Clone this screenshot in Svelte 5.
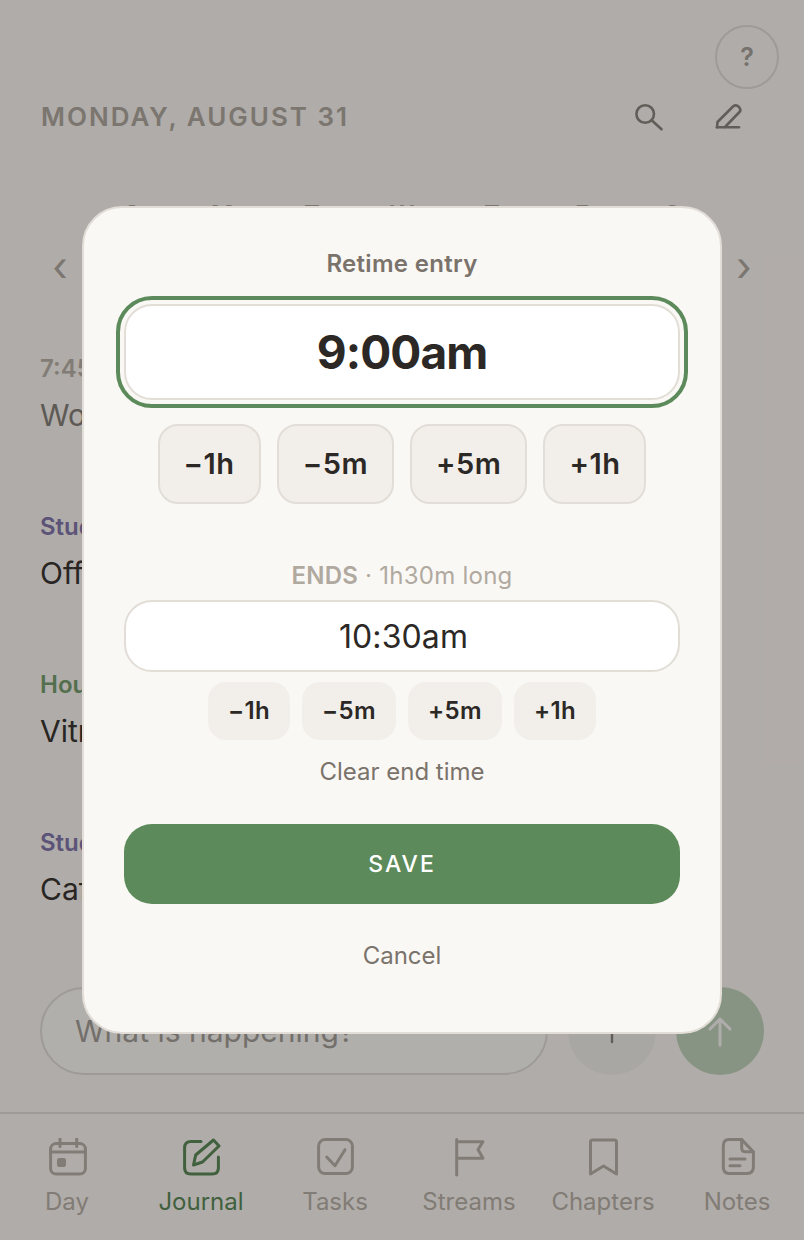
<script lang="ts">
  const days = ['S', 'M', 'T', 'W', 'T', 'F', 'S'];

  const entries = [
    { label: '7:45am', tone: 'stamp', text: 'Woke up early', past: true },
    { label: 'Study', tone: 'study', text: 'Office hours' },
    { label: 'House', tone: 'house', text: 'Vitrine' },
    { label: 'Study', tone: 'study', text: 'Cafe reading' },
  ];

  const tabs = ['Day', 'Journal', 'Tasks', 'Streams', 'Chapters', 'Notes'];
  const stepLabels = ['−1h', '−5m', '+5m', '+1h'];
</script>

<div class="page">
  <div class="help-row"><div class="help">?</div></div>

  <header class="head">
    <h1>MONDAY, AUGUST 31</h1>
    <div class="head-icons">
      <svg viewBox="0 0 32 32" width="32" height="32" fill="none" stroke="currentColor" stroke-width="2.6" stroke-linecap="round">
        <circle cx="13.2" cy="14" r="8.8" />
        <path d="M20.5 21 L29.500 29.300" />
      </svg>
      <svg viewBox="0 0 32 32" width="32" height="32" fill="none" stroke="currentColor" stroke-width="2.6" stroke-linecap="round" stroke-linejoin="round">
        <path d="M5 27.300 L5.500 22 L21 6.500 Q24 4 27 7 Q29.500 10 27.500 12 L13 27" />
        <path d="M5 27.300 H27" />
      </svg>
    </div>
  </header>

  <div class="week">
    <span class="chev">‹</span>
    <div class="days">
      {#each days as d}<span>{d}</span>{/each}
    </div>
    <span class="chev">›</span>
  </div>

  <div class="feed">
    {#each entries as e}
      <div class="entry" class:past={e.past}>
        <div class="label {e.tone}">{e.label}</div>
        <div class="text">{e.text}</div>
      </div>
    {/each}
  </div>

  <div class="composer">
    <div class="input">What is happening?</div>
    <div class="round plus">
      <svg viewBox="0 0 26 26" width="26" height="26" stroke="currentColor" stroke-width="2.400" stroke-linecap="round"><path d="M13 2 V24 M2 13 H24" /></svg>
    </div>
    <div class="round send">
      <svg viewBox="0 0 32 32" width="32" height="32" fill="none" stroke="currentColor" stroke-width="3" stroke-linecap="round" stroke-linejoin="round"><path d="M16 30 V4 M6 14 L16 4 L26 14" /></svg>
    </div>
  </div>

  <nav class="tabs">
    {#each tabs as t, i}
      <div class="tab" class:active={t === 'Journal'}>
        <svg viewBox="0 0 40 40" width="40" height="40" fill="none" stroke="currentColor" stroke-width="3" stroke-linecap="round" stroke-linejoin="round">
          {#if i === 0}
            <rect x="3.600" y="5.600" width="34.800" height="30.500" rx="5.500" />
            <path d="M3.600 14 H38.400 M13 0.500 V8.500 M29.700 0.500 V8.500" />
            <rect x="11.500" y="21.500" width="6" height="6" rx="0.800" fill="currentColor" />
          {:else if i === 1}
            <path d="M20 3.500 H10 Q3.600 3.500 3.600 10 V30 Q3.600 36 10 36 H31 Q37.400 36 37.400 30 V19" />
            <path d="M12.500 27 L14.700 17 L32.500 2 L38 8 L21.500 24 Z" />
          {:else if i === 2}
            <rect x="3.600" y="1.600" width="33.800" height="34" rx="6.500" />
            <path d="M11.700 19 L20 27.700 L30 11.700" />
          {:else if i === 3}
            <path d="M7.700 1.500 V37 M7.700 3.700 H34 L29 11.500 L34 20.300 H7.700" />
          {:else if i === 4}
            <path d="M7.500 4 Q7.500 2 9.500 2 H31.500 Q33.500 2 33.500 4 V36 L20.500 28 L7.500 36 Z" />
          {:else}
            <path d="M24.700 1.600 H12 Q6.300 1.600 6.300 8 V29 Q6.300 35.400 12 35.400 H30 Q36.400 35.400 36.400 29 V13.700 Z" />
            <path d="M24.700 1.600 V10 Q24.700 13.700 28 13.700 H36.400 M13 21 H28 M13 27.700 H23" />
          {/if}
        </svg>
        <span>{t}</span>
      </div>
    {/each}
  </nav>

  <div class="overlay">
    <div class="modal">
      <div class="title">Retime entry</div>
      <div class="time main">9:00am</div>
      <div class="steps big">
        {#each stepLabels as s}<button>{s}</button>{/each}
      </div>
      <div class="ends"><b>ENDS</b> · 1h30m long</div>
      <div class="time end">10:30am</div>
      <div class="steps small">
        {#each stepLabels as s}<button>{s}</button>{/each}
      </div>
      <div class="clear">Clear end time</div>
      <button class="save">SAVE</button>
      <div class="cancel">Cancel</div>
    </div>
  </div>
</div>

<style>
  :global(body) {
    margin: 0;
    background: #fdf7f2;
    font-family: Inter, 'Liberation Sans', sans-serif;
  }
  .page {
    position: relative;
    width: 804px;
    height: 1240px;
    overflow: hidden;
    display: flex;
    flex-direction: column;
    color: #3a3633;
  }
  .help-row {
    display: flex;
    justify-content: flex-end;
    padding: 25px 25px 0 0;
  }
  .help {
    width: 60px;
    height: 60px;
    border: 2px solid #e2ddd7;
    border-radius: 50%;
    display: flex;
    align-items: center;
    justify-content: center;
    font-size: 25px;
    font-weight: 600;
    color: #a8a39c;
  }
  .head {
    display: flex;
    align-items: center;
    justify-content: space-between;
    padding: 0 60px 0 41px;
    height: 54px;
  }
  .head h1 {
    margin: 0;
    font-size: 26px;
    font-weight: 600;
    letter-spacing: 2px;
    color: #b0a99f;
  }
  .head-icons {
    display: flex;
    gap: 48px;
    color: #8c867f;
  }
  .week {
    display: flex;
    align-items: flex-start;
    justify-content: space-between;
    padding: 0 46px;
    margin-top: 57px;
    height: 148px;
  }
  .chev {
    margin-top: 43px;
    font-size: 40px;
    line-height: 48px;
    color: #b0a9a0;
    width: 28px;
    text-align: center;
  }
  .days {
    flex: 1;
    display: grid;
    grid-template-columns: repeat(7, 90px);
    justify-content: center;
    text-align: center;
    font-size: 24px;
    font-weight: 600;
    color: #b0a9a0;
  }
  .feed {
    display: flex;
    flex-direction: column;
    gap: 73px;
    padding: 5px 0 0 40px;
    height: 641px;
    box-sizing: border-box;
  }
  .label {
    font-size: 24px;
    font-weight: 600;
    line-height: 32px;
  }
  .label.stamp { color: #b9b2a8; }
  .label.study { color: #8478ad; }
  .label.house { color: #789f70; }
  .text {
    margin-top: 7px;
    font-size: 30px;
    line-height: 46px;
  }
  .entry.past .text { color: #86807a; }
  .composer {
    display: flex;
    align-items: center;
    gap: 20px;
    padding: 0 40px;
    height: 88px;
    margin-top: -2px;
  }
  .input {
    flex: 1;
    height: 88px;
    box-sizing: border-box;
    border: 2px solid #e2ddd7;
    border-radius: 44px;
    background: #fefbf7;
    display: flex;
    align-items: center;
    padding-left: 33px;
    font-size: 30px;
    color: #a5a099;
  }
  .round {
    width: 88px;
    height: 88px;
    border-radius: 50%;
    display: flex;
    align-items: center;
    justify-content: center;
    flex-shrink: 0;
  }
  .plus { background: #f2efeb; color: #8c867f; }
  .send { background: #c2d4bc; color: #faf8f5; }
  .tabs {
    margin-top: 37px;
    border-top: 2px solid #e2ddd7;
    display: grid;
    grid-template-columns: repeat(6, 134px);
    padding-top: 24px;
  }
  .tab {
    display: flex;
    flex-direction: column;
    align-items: center;
    gap: 9px;
    font-size: 24px;
    line-height: 30px;
    color: #b9b2a8;
  }
  .tab.active { color: #5c8a5a; }
  .overlay {
    position: absolute;
    inset: 0;
    background: rgba(0, 0, 0, 0.3);
    display: flex;
    align-items: center;
    justify-content: center;
  }
  .modal {
    width: 640px;
    height: 828px;
    box-sizing: border-box;
    background: #faf8f5;
    border: 2px solid #e2ddd7;
    border-radius: 40px;
    padding: 41px 40px 0;
    display: flex;
    flex-direction: column;
    align-items: stretch;
    text-align: center;
  }
  .title {
    font-size: 24px;
    line-height: 30px;
    font-weight: 600;
    letter-spacing: 0.3px;
    color: #7a736b;
  }
  .time {
    box-sizing: border-box;
    background: #ffffff;
    border: 2px solid #e2ddd7;
    color: #2c2825;
    display: flex;
    align-items: center;
    justify-content: center;
  }
  .time.main {
    margin-top: 25px;
    height: 96px;
    border-radius: 28px;
    font-size: 46px;
    font-weight: 700;
    letter-spacing: -0.9px;
    outline: 4px solid #5c8a5a;
    outline-offset: 4px;
  }
  .time.end {
    margin-top: 8px;
    height: 72px;
    border-radius: 28px;
    font-size: 32px;
    font-weight: 400;
    letter-spacing: 0.1px;
    padding-left: 3px;
  }
  .steps {
    display: flex;
    justify-content: center;
  }
  .steps button {
    font-family: inherit;
    font-weight: 600;
    color: #2c2825;
    background: #f2efeb;
    padding: 0;
  }
  .steps.big {
    margin-top: 24px;
    gap: 16px;
  }
  .steps.big button {
    height: 80px;
    padding: 0 24px 2px;
    border: 2px solid #e2ddd7;
    border-radius: 20px;
    font-size: 29px;
    letter-spacing: 0.5px;
  }
  .steps.small {
    margin-top: 10px;
    gap: 12px;
  }
  .steps.small button {
    height: 58px;
    padding: 0 20px 2px;
    border: 0;
    border-radius: 18px;
    font-size: 24px;
    letter-spacing: 0.35px;
  }
  .ends {
    margin-top: 56px;
    font-size: 24px;
    line-height: 32px;
    letter-spacing: 0.25px;
    color: #b0a9a0;
  }
  .ends b { font-weight: 600; }
  .clear {
    margin-top: 16px;
    font-size: 24px;
    line-height: 32px;
    color: #7a736b;
  }
  .save {
    margin-top: 36px;
    height: 80px;
    border: 0;
    border-radius: 28px;
    background: #5c8a5a;
    color: #ffffff;
    font-family: inherit;
    font-size: 23px;
    font-weight: 500;
    letter-spacing: 2px;
  }
  .cancel {
    margin-top: 36px;
    font-size: 24px;
    line-height: 32px;
    color: #7a736b;
  }
</style>
